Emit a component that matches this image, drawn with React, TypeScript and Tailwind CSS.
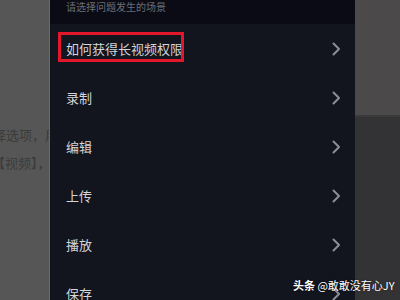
import React from "react";

const font = { fontFamily: '"Noto Sans CJK SC", "Noto Sans", sans-serif' };

function Chevron() {
  return (
    <svg width="10" height="14" viewBox="0 0 10 14" className="shrink-0">
      <path d="M2.5 1.5 L8 7 L2.5 12.5" fill="none" stroke="#8b8e97" strokeWidth="2" strokeLinecap="round" strokeLinejoin="round" />
    </svg>
  );
}

const items = ["如何获得长视频权限", "录制", "编辑", "上传", "播放", "保存"];

export default function App() {
  return (
    <div className="relative w-[400px] h-[300px] overflow-hidden flex" style={font}>
      <div className="w-[49px] h-full bg-[#565656] overflow-hidden flex flex-col pt-[126px] gap-[10px] text-[13px] text-[#3b3b3b] whitespace-nowrap">
        <div className="-ml-[7px] leading-[18px]">择选项，用</div>
        <div className="-ml-[8px] leading-[18px]">【视频】，</div>
      </div>
      <div className="w-[1px] h-full bg-[#6a6a6a]" />
      <div className="w-[305px] h-full bg-[#12141e] flex flex-col">
        <div className="h-[24px] shrink-0 bg-[#0a0b14] pl-[16px] text-[10px] leading-[14px] text-[#6b6e77]">请选择问题发生的场景</div>
        {items.map((t, i) => (
          <div key={t} className="relative h-[49px] shrink-0 flex items-center justify-between pl-[16px] pr-[14px]">
            <span className="text-[13px] text-[#d4d5d9]">{t}</span>
            <Chevron />
            {i === 0 && (
              <div className="absolute left-[8px] top-[8px] w-[126px] h-[30px] border-[3px] border-[#e3172b]" />
            )}
          </div>
        ))}
      </div>
      <div className="w-[45px] h-full flex flex-col">
        <div className="h-[115px] bg-[#4b4949]" />
        <div className="h-[2px] bg-[#3a3a3a]" />
        <div className="flex-1 bg-[#333336]" />
      </div>
      <div className="absolute left-[293px] top-[277px] text-[11px] leading-[16px] text-white whitespace-nowrap" style={{ textShadow: "0 0 2px rgba(0,0,0,0.6)" }}>
        <span className="font-bold">头条</span> @敢敢没有心JY
      </div>
    </div>
  );
}
